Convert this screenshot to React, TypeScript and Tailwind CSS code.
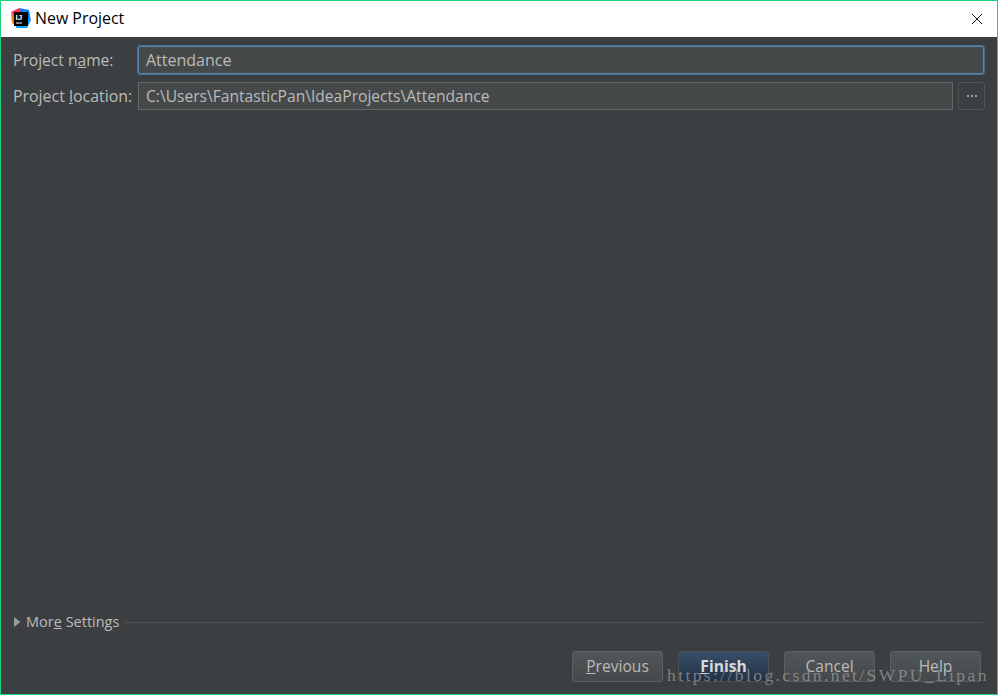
export default function App() {
  const font = { fontFamily: '"Open Sans", "Noto Sans", sans-serif' };
  return (
    <div className="w-[998px] h-[695px] border border-[#1dd07f] flex flex-col relative overflow-hidden font-['Noto_Sans',sans-serif]">
      <div className="h-[36px] shrink-0 bg-white flex items-center pl-[9px] pr-[14px]">
        <svg width="21" height="21" viewBox="0 0 21 21" className="shrink-0 -translate-y-px">
          <path d="M1 4 L9 0 L14 5 L4 11 Z" fill="#fe315d" />
          <path d="M1 6 L6 9 L6 18 L2 15 Z" fill="#f97a12" />
          <path d="M9 0 L19 2 L21 13 L14 9 Z" fill="#087cfa" />
          <path d="M6 20 L17 20 L21 12 L8 10 Z" fill="#07a3f2" />
          <rect x="4" y="4" width="14" height="14" fill="#000" />
          <text x="5.5" y="11.5" fontSize="8" fontWeight="700" fill="#fff" fontFamily="Liberation Sans, sans-serif">IJ</text>
          <rect x="6" y="14.5" width="6" height="1" fill="#fff" />
        </svg>
        <span className="ml-[4px] text-[15.9px] text-black leading-none" style={font}>New Project</span>
        <svg width="12" height="12" viewBox="0 0 12 12" className="ml-auto shrink-0">
          <path d="M1 1 L11 11 M11 1 L1 11" stroke="#111" strokeWidth="1" fill="none" />
        </svg>
      </div>
      <div className="flex-1 bg-[#3c3f41] flex flex-col text-[15.6px] text-[#bbbbbb]" style={font}>
        <div className="flex items-center pt-[9px] pl-[12px] pr-[13px]">
          <span className="w-[125px] shrink-0 leading-none pt-px">Project n<u>a</u>me:</span>
          <div className="flex-1 h-[28px] bg-[#45494a] border border-[#5a86b3] rounded-[2px] outline outline-1 outline-[#466d94] flex items-center pl-[7px] leading-none text-[16px]">Attendance</div>
        </div>
        <div className="flex items-center mt-[8px] pl-[12px] pr-[12px]">
          <span className="w-[125px] shrink-0 leading-none pt-px whitespace-nowrap text-[15.9px]">Project <u>l</u>ocation:</span>
          <div className="flex-1 h-[28px] bg-[#45494a] border border-[#646464] flex items-center pl-[7px] pt-px leading-none">C:\Users\FantasticPan\IdeaProjects\Attendance</div>
          <div className="ml-[5px] w-[27px] h-[28px] shrink-0 rounded-[3px] border border-[#545556] bg-[#3c3f41] flex items-center justify-center gap-[2px]">
            <i className="w-[2px] h-[2px] bg-[#a0a0a0]" />
            <i className="w-[2px] h-[2px] bg-[#a0a0a0]" />
            <i className="w-[2px] h-[2px] bg-[#a0a0a0]" />
          </div>
        </div>
        <div className="flex-1" />
        <div className="flex items-center pl-[13px] pr-[14px] h-[18px] text-[14.5px]">
          <svg width="7" height="10" viewBox="0 0 7 10" className="shrink-0"><path d="M0 0 L6.5 5 L0 10 Z" fill="#9a9c9e" /></svg>
          <span className="ml-[5px] leading-none whitespace-nowrap">Mor<u>e</u> Settings</span>
          <div className="ml-[5px] flex-1 h-px bg-[#515151]" />
        </div>
        <div className="flex justify-end gap-[15px] pt-[20px] pb-[12px] pr-[16px]">
          <Btn><u>P</u>revious</Btn>
          <Btn primary><b className="font-bold text-[#d8dadc]"><u>F</u>inish</b></Btn>
          <Btn>Cancel</Btn>
          <Btn>Help</Btn>
        </div>
      </div>
      <span className="absolute left-[666px] top-[664px] text-[17.5px] leading-[20px] tracking-[2.4px] whitespace-nowrap text-[#a0a0a0]/70 font-['Liberation_Serif',serif]">https://blog.csdn.net/SWPU_Lipan</span>
    </div>
  );
}

function Btn({ children, primary }: { children: React.ReactNode; primary?: boolean }) {
  return (
    <div className={
      primary
        ? "w-[91px] h-[31px] rounded-[3px] border border-[#4c5052] bg-gradient-to-b from-[#384f6b] to-[#233143] flex items-center justify-center leading-none"
        : "w-[91px] h-[31px] rounded-[3px] border border-[#5e6060] bg-gradient-to-b from-[#515658] to-[#45494b] flex items-center justify-center leading-none"
    }>
      {children}
    </div>
  );
}
